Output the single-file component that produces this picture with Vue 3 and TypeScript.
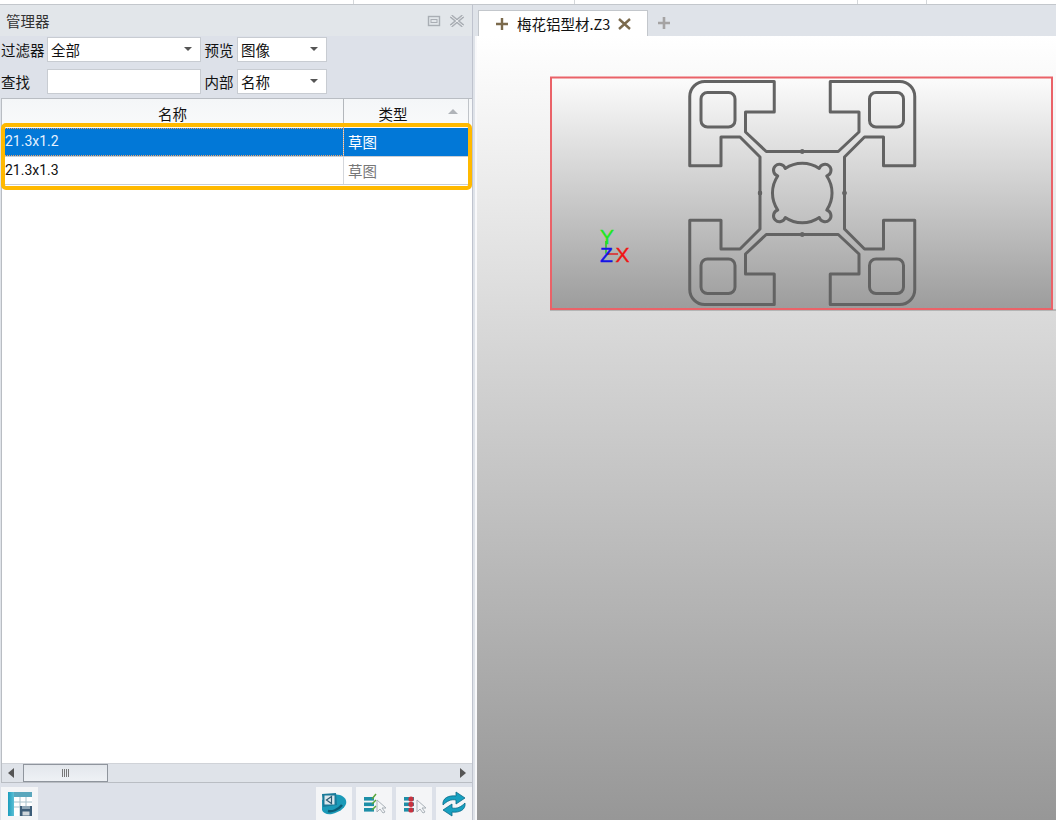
<template>
  <div class="app">
    <div class="top-strip">
      <i v-for="x in stripTicks" :key="x" class="tick" :style="{ left: x + 'px' }"></i>
    </div>
    <div class="main">
      <section class="manager">
        <header class="manager__head">
          <span class="manager__title">管理器</span>
          <svg class="pin" width="14" height="12" viewBox="0 0 14 12">
            <rect x="1.5" y="1.5" width="11" height="9" fill="none" stroke="#a9aeb4" stroke-width="1.4" />
            <rect x="4" y="4.5" width="6" height="3" fill="none" stroke="#a9aeb4" />
          </svg>
          <svg class="close" width="16" height="12" viewBox="0 0 16 12">
            <path d="M2 1 L14 11 M14 1 L2 11" stroke="#a9aeb4" stroke-width="3.6" fill="none" />
            <path d="M2 1 L14 11 M14 1 L2 11" stroke="#eef0f3" stroke-width="1" fill="none" />
          </svg>
        </header>

        <div class="filters">
          <label>过滤器</label>
          <div class="combo">全部<b></b></div>
          <label class="center">预览</label>
          <div class="combo">图像<b></b></div>
          <label>查找</label>
          <div class="combo"></div>
          <label class="center">内部</label>
          <div class="combo">名称<b></b></div>
        </div>

        <div class="list">
          <div class="list__head">
            <div class="cell cell--name">名称</div>
            <div class="cell cell--type">类型<em></em></div>
          </div>
          <div v-for="(row, i) in rows" :key="row" class="row" :class="{ 'row--on': i === 0 }">
            <div class="cell-name">{{ row }}</div>
            <div class="cell-type">草图</div>
          </div>
          <div class="highlight"></div>
          <div class="spacer"></div>
          <div class="hscroll">
            <span class="arrow arrow--l"></span>
            <div class="thumb"><i></i><i></i><i></i><i></i></div>
            <span class="arrow arrow--r"></span>
          </div>
        </div>

        <footer class="tools">
          <button class="tool tool--first">
            <svg width="26" height="26" viewBox="0 0 26 26">
              <defs>
                <linearGradient id="tableSide" x1="0" y1="0" x2="1" y2="0">
                  <stop offset="0" stop-color="#1c9dbd" />
                  <stop offset="1" stop-color="#5cc0d6" />
                </linearGradient>
              </defs>
              <rect x="1" y="1" width="24" height="24" fill="#fff" />
              <rect x="1" y="1" width="24" height="5" fill="#5aa7bd" />
              <rect x="1" y="1" width="6" height="24" fill="url(#tableSide)" />
              <path d="M7 11H25M7 16H25M13 6V25M19 6V25" stroke="#a8c2cc" fill="none" />
              <rect x="13" y="15" width="12" height="10" fill="#3d5d78" />
              <rect x="15" y="15" width="8" height="3" fill="#8ea6b6" />
              <rect x="15.5" y="20.5" width="7" height="4" fill="#cfd6db" />
            </svg>
          </button>
          <div class="tools__gap"></div>
          <button class="tool">
            <svg width="26" height="24" viewBox="0 0 26 24">
              <path d="M12 2 L19 3 C24 5 26 8 25 12 C23 17 18 20 11 22 C6 23 2 21 1 18 L1 8 Z" fill="#1b9ab8" />
              <path d="M7 19 C11 20 17 18 21 13" stroke="#0b5d76" stroke-width="2.4" fill="none" />
              <path d="M1 2 L15 1 L16 13 L2 15 Z" fill="#1a7a99" />
              <rect x="3.5" y="3.5" width="10" height="9" fill="#dbe7ed" />
              <path d="M10.5 4.5 L5.5 8 L10.5 11.5 Z" fill="none" stroke="#2c5b72" stroke-width="1.2" />
            </svg>
          </button>
          <button class="tool">
            <svg width="28" height="22" viewBox="0 0 28 22">
              <rect x="4" y="4" width="10" height="3.6" fill="#1d8fa8" />
              <rect x="4" y="9.5" width="10" height="3.6" fill="#1d8fa8" />
              <rect x="4" y="15" width="10" height="3.6" fill="#1d8fa8" />
              <path d="M12 6 L16 1 M12 11 L16 7 M12 17 L16 13" stroke="#5aa83c" stroke-width="1.5" />
              <path d="M17 7 V19 L20 16 L23 20 L25 19 L22 15 H26 Z" fill="#f4f6f8" stroke="#a9b1b8" />
            </svg>
          </button>
          <button class="tool">
            <svg width="28" height="22" viewBox="0 0 28 22">
              <rect x="4" y="4" width="10" height="3.6" fill="#1d8fa8" />
              <rect x="4" y="9.5" width="10" height="3.6" fill="#1d8fa8" />
              <rect x="4" y="15" width="10" height="3.6" fill="#1d8fa8" />
              <circle cx="11" cy="6" r="2.6" fill="#c8323f" />
              <circle cx="11" cy="11.3" r="2.6" fill="#c8323f" />
              <circle cx="11" cy="17" r="2.6" fill="#c8323f" />
              <path d="M17 7 V19 L20 16 L23 20 L25 19 L22 15 H26 Z" fill="#f4f6f8" stroke="#a9b1b8" />
            </svg>
          </button>
          <button class="tool">
            <svg width="28" height="28" viewBox="0 0 28 28">
              <path d="M3 15 C2 8 9 5 16 6 L16 2 L25 8 L16 14 L16 10 C11 9 7 11 3 15 Z" fill="#17a0c0" stroke="#0a6a88" stroke-width=".8" />
              <path d="M25 13 C26 20 19 23 12 22 L12 26 L3 20 L12 14 L12 18 C17 19 21 17 25 13 Z" fill="#17a0c0" stroke="#0a6a88" stroke-width=".8" />
            </svg>
          </button>
        </footer>
      </section>

      <section class="work">
        <nav class="tabs">
          <div class="tab">
            <svg class="tab__plus" width="14" height="14" viewBox="0 0 14 14">
              <path d="M7 1 V13 M1 7 H13" stroke="#7b6a4c" stroke-width="2.4" />
            </svg>
            <span class="tab__name">梅花铝型材.Z3</span>
            <svg class="tab__close" width="13" height="12" viewBox="0 0 13 12">
              <path d="M1 1 L12 11 M12 1 L1 11" stroke="#7b6a4c" stroke-width="2.4" fill="none" />
            </svg>
          </div>
          <svg class="tab-add" width="14" height="14" viewBox="0 0 14 14">
            <path d="M7 1 V13 M1 7 H13" stroke="#a5a3a3" stroke-width="2.6" />
          </svg>
        </nav>

        <div class="canvas">
          <svg class="sketch" width="579" height="290" viewBox="477 36 579 290">
            <defs>
              <linearGradient id="viewFill" x1="0" y1="0" x2="0" y2="1">
                <stop offset="0" stop-color="#fcfcfc" />
                <stop offset="1" stop-color="#9c9c9c" />
              </linearGradient>
            </defs>
            <path d="M550 310 H1056" stroke="#8d8d8d" />
            <rect x="551" y="77.5" width="501" height="231.5" fill="url(#viewFill)" stroke="#ea6268" stroke-width="2" />
            <g transform="translate(802.25 193)" fill="none" stroke="#636363" stroke-width="3" stroke-linejoin="round">
              <g v-for="m in mirrors" :key="m" :transform="m">
                <path d="M0 -41.5 L-36 -41.5 L-56.75 -61 L-56.75 -81 L-28 -81 L-28 -111.5 L-97.5 -111.5 A15 15 0 0 0 -112.5 -96.5 L-112.5 -27.3 L-81.25 -27.3 L-81.25 -56 L-62.25 -56 L-42.25 -36 L-42.25 0" />
                <rect x="-101.25" y="-100.5" width="34" height="34.5" rx="6.5" />
                <circle cx="0" cy="-41.5" r="2.2" fill="#636363" stroke="none" />
                <circle cx="-42.25" cy="0" r="2.2" fill="#636363" stroke="none" />
              </g>
              <path d="M-17 -24.5 A30 30 0 0 1 17 -24.5 A6 6 0 1 1 24.5 -17 A30 30 0 0 1 24.5 17 A6 6 0 1 1 17 24.5 A30 30 0 0 1 -17 24.5 A6 6 0 1 1 -24.5 17 A30 30 0 0 1 -24.5 -17 A6 6 0 1 1 -17 -24.5 Z" />
            </g>
            <path d="M606 241 V254" stroke="#22c522" stroke-width="1.5" />
            <path d="M606 254 H618" stroke="#e02020" stroke-width="1.5" />
            <text x="600" y="244" class="axis" fill="#1fe61f" stroke="#1fe61f">Y</text>
            <text x="600" y="262" class="axis" fill="#1414e6" stroke="#1414e6">Z</text>
            <text x="615.5" y="262" class="axis" fill="#f01414" stroke="#f01414">X</text>
          </svg>
        </div>
      </section>
    </div>
  </div>
</template>

<script setup lang="ts">
const stripTicks: number[] = [353, 574, 857, 926]
const rows: string[] = ['21.3x1.2', '21.3x1.3']
// 型材四个象限对称
const mirrors: string[] = ['scale(1 1)', 'scale(-1 1)', 'scale(1 -1)', 'scale(-1 -1)']
</script>

<style>
html,
body {
  margin: 0;
  background: #fff;
}
</style>

<style scoped>
.app {
  width: 1056px;
  height: 820px;
  display: flex;
  flex-direction: column;
  overflow: hidden;
  font-family: "Noto Sans CJK SC", "Noto Sans", sans-serif;
  font-size: 14.5px;
  color: #111;
  background: #dfe3e9;
}

.top-strip {
  position: relative;
  height: 4px;
  flex: none;
  background: #fff;
  border-bottom: 1px solid #c3c7cc;
}

.tick {
  position: absolute;
  top: 0;
  width: 1px;
  height: 4px;
  background: #d4d7da;
}

.main {
  flex: 1;
  min-height: 0;
  display: flex;
}

.manager {
  width: 472px;
  flex: none;
  display: flex;
  flex-direction: column;
  border-right: 1px solid #bfc3ce;
  box-sizing: content-box;
}

.manager__head {
  height: 31px;
  flex: none;
  display: flex;
  align-items: center;
  padding: 1px 7px 0 6px;
  box-sizing: border-box;
  background: #e2e6ea;
  color: #333;
}

.manager__title {
  flex: 1;
  line-height: 20px;
}

.close {
  margin-left: 8px;
}

.filters {
  height: 62px;
  flex: none;
  display: grid;
  grid-template-columns: 46px 154px 36px 90px;
  grid-template-rows: 25px 25px;
  row-gap: 7px;
  align-content: start;
  padding: 1px 0 0 1px;
  box-sizing: border-box;
  background: #dde1e9;
}

.filters label {
  line-height: 25px;
  white-space: nowrap;
}

.filters .center {
  text-align: center;
}

.combo {
  position: relative;
  background: #fff;
  border: 1px solid #c8ccd2;
  padding-left: 3px;
  line-height: 23px;
  box-sizing: border-box;
}

.combo b {
  position: absolute;
  right: 8px;
  top: 9px;
  border: 4px solid transparent;
  border-top: 4px solid #555;
  border-bottom: 0;
}

.list {
  position: relative;
  flex: 1;
  min-height: 0;
  display: flex;
  flex-direction: column;
  margin: 0 0 0 1px;
  background: #fff;
  border: 1px solid #b9bdc3;
  border-right-width: 0;
}

.list__head {
  height: 29px;
  flex: none;
  display: flex;
  background: linear-gradient(#f4f6f8, #f9fafb);
}

.cell {
  text-align: center;
  line-height: 30px;
  box-sizing: border-box;
}

.cell--name {
  width: 342px;
  border-right: 1px solid #b3b7bc;
}

.cell--type {
  position: relative;
  width: 125px;
  padding-right: 26px;
  border-right: 1px solid #c0c4c9;
}

.cell--type em {
  position: absolute;
  right: 10px;
  top: 10px;
  border: 5px solid transparent;
  border-top: 0;
  border-bottom: 5px solid #b0b4b9;
}

.row {
  height: 28px;
  flex: none;
  display: flex;
  width: 466px;
  line-height: 27px;
  border-bottom: 1px solid #c9ced6;
  box-sizing: border-box;
}

.cell-name {
  width: 342px;
  padding-left: 3px;
  border-right: 1px solid #d4d7dc;
  box-sizing: border-box;
  font-family: Roboto, "Noto Sans", sans-serif;
  font-size: 14px;
}

.cell-type {
  padding-left: 4px;
  color: #777;
}

.row--on {
  height: 29px;
  background: #0278d7;
  color: #fff;
}

.row--on .cell-name {
  outline: 1px dotted #e9a46a;
  outline-offset: -1px;
  color: #e6f2ff;
}

.row--on .cell-type {
  color: #fff;
}

.highlight {
  position: absolute;
  left: -1px;
  top: 24px;
  width: 471px;
  height: 67px;
  border: 4px solid #ffb900;
  border-radius: 5px;
  box-sizing: border-box;
  pointer-events: none;
}

.spacer {
  flex: 1;
}

.hscroll {
  height: 18px;
  flex: none;
  display: flex;
  align-items: center;
  background: #dfe3e9;
  border-top: 1px solid #d0d3d8;
  padding: 0 6px;
}

.arrow {
  border: 5px solid transparent;
}

.arrow--l {
  border-right: 6px solid #555;
  border-left: 0;
  margin-right: 9px;
}

.arrow--r {
  border-left: 6px solid #555;
  border-right: 0;
  margin-left: auto;
}

.thumb {
  width: 85px;
  height: 18px;
  display: flex;
  justify-content: center;
  align-items: center;
  gap: 1px;
  background: linear-gradient(#e3e7ec, #eef1f5);
  border: 1px solid #8f959d;
  box-sizing: border-box;
}

.thumb i {
  width: 1px;
  height: 8px;
  background: #777;
}

.tools {
  height: 37px;
  flex: none;
  display: flex;
  align-items: flex-start;
  gap: 4px;
  padding: 4px 0 0 1px;
  box-sizing: border-box;
  background: #dde1e9;
}

.tools__gap {
  flex: 1;
}

.tool {
  width: 36px;
  height: 33px;
  display: flex;
  align-items: center;
  justify-content: center;
  padding: 0;
  border: 0;
  background: #f4f5f7;
}

.tool--first {
  width: 37px;
}

.work {
  flex: 1;
  min-width: 0;
  display: flex;
  flex-direction: column;
  padding-left: 2px;
  background: #dfe3e9;
}

.tabs {
  height: 31px;
  flex: none;
  display: flex;
  align-items: flex-end;
  padding-left: 3px;
  background: #dfe3e9;
}

.tab {
  width: 170px;
  height: 26px;
  display: flex;
  align-items: center;
  padding-left: 16px;
  box-sizing: border-box;
  background: #fff;
  border: 1px solid #c3c7cc;
  border-bottom: 0;
  white-space: nowrap;
}

.tab__plus {
  margin-right: 8px;
}

.tab__name {
  color: #111;
  width: 101px;
}

.tab__close {
  flex: none;
}

.tab-add {
  margin: 0 0 6px 9px;
}

.canvas {
  position: relative;
  flex: 1;
  min-height: 0;
  background: linear-gradient(#ffffff, #979797);
  border-left: 2px solid #f8f8fa;
}

.sketch {
  position: absolute;
  left: 0;
  top: 0;
}

.axis {
  font-family: "Liberation Sans", sans-serif;
  font-size: 21px;
  stroke-width: 0.4px;
}
</style>
